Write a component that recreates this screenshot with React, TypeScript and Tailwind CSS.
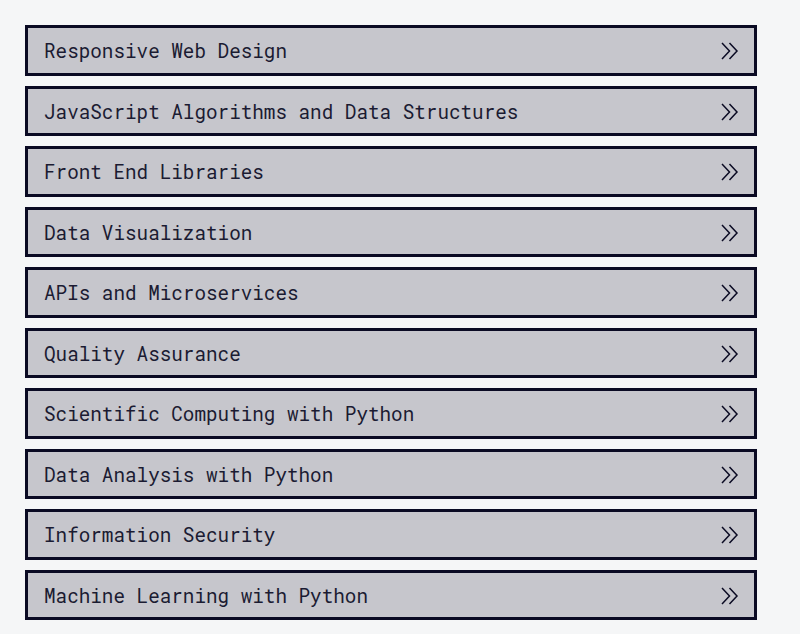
import React from 'react';

const courses = [
  'Responsive Web Design',
  'JavaScript Algorithms and Data Structures',
  'Front End Libraries',
  'Data Visualization',
  'APIs and Microservices',
  'Quality Assurance',
  'Scientific Computing with Python',
  'Data Analysis with Python',
  'Information Security',
  'Machine Learning with Python',
];

const DoubleChevron: React.FC = () => (
  <svg width="18" height="18" viewBox="0 0 18 18" fill="none" stroke="#0a0a23" strokeWidth="1.5" strokeLinejoin="miter">
    <path d="M1 1 L8.5 9 L1 17" />
    <path d="M8.5 1 L16 9 L8.5 17" />
  </svg>
);

const App: React.FC = () => {
  return (
    <div className="min-h-[634px] w-[800px] bg-[#f5f6f7] pt-[25px] pl-[25px]">
      <ul className="w-[732px] flex flex-col gap-[10px]">
        {courses.map((title) => (
          <li key={title}>
            <a
              href="#"
              className="flex items-center justify-between border-[3px] border-[#0a0a23] bg-[#c6c6cc] pl-[16px] pr-[15px] pt-[9px] pb-[7px] text-[19.3px] leading-[28.5px] text-[#1b1b32]"
              style={{ fontFamily: '"Roboto Mono", "DejaVu Sans Mono", monospace' }}
            >
              <span>{title}</span>
              <DoubleChevron />
            </a>
          </li>
        ))}
      </ul>
    </div>
  );
};

export default App;
